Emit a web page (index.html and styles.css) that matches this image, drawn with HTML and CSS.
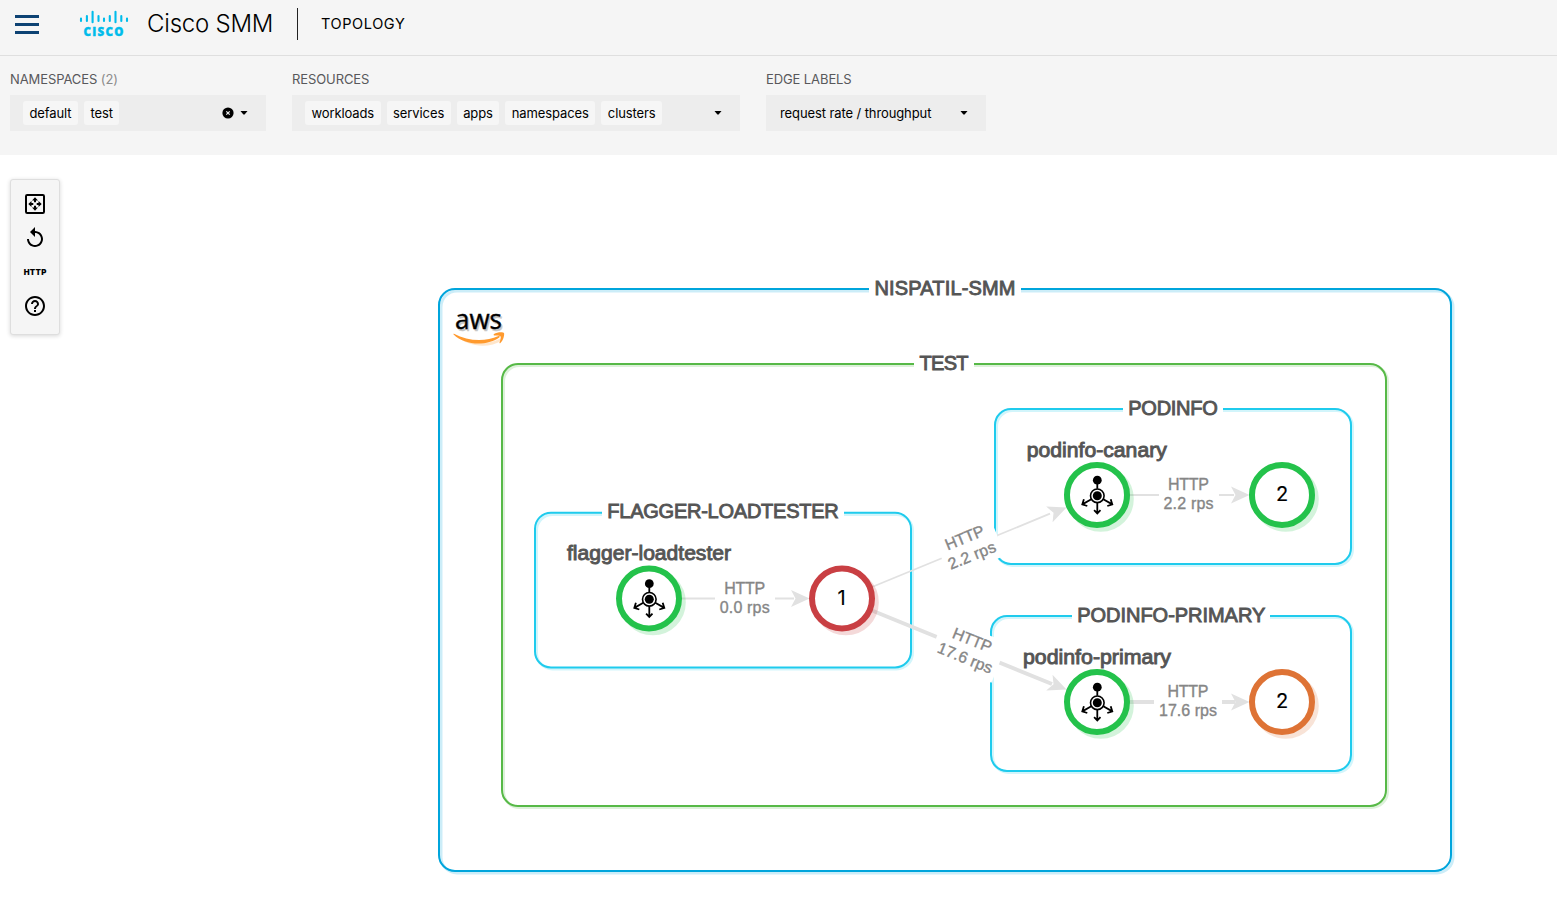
FILE: index.html
```html
<!DOCTYPE html>
<html lang="en">
<head>
<meta charset="utf-8">
<title>Cisco SMM - Topology</title>
<link rel="stylesheet" href="styles.css">
</head>
<body>
<header class="topbar">
  <button class="menu" aria-label="Menu"><span></span><span></span><span></span></button>
  <svg class="logo" width="50" height="28" viewBox="0 0 50 28">
    <g class="logo-bars">
      <path d="M2 8.500v2.400M7.900 6v4.900M13.600 1.800v10.400M19.500 6v4.900M25 8.500v2.400M30.800 6v4.900M36.500 1.800v10.400M42.300 6v4.900M48 8.500v2.400"/>
    </g>
    <text class="logo-text" x="4.500" y="26" textLength="40" lengthAdjust="spacing">CISCO</text>
  </svg>
  <span class="product">Cisco SMM</span>
  <span class="divider"></span>
  <span class="page">TOPOLOGY</span>
</header>

<section class="filters">
  <div class="filter namespaces">
    <label>NAMESPACES <span class="count">(2)</span></label>
    <div class="select">
      <span class="chip">default</span><span class="chip">test</span>
      <svg class="clear" width="12" height="12" viewBox="0 0 12 12"><circle cx="6" cy="6" r="5.600"/><path d="M4.300 4.300l3.400 3.400M7.700 4.300L4.300 7.700"/></svg>
      <svg class="caret" width="8" height="4" viewBox="0 0 8 4"><path d="M0.500 0h7L4.600 3.600h-1.200z"/></svg>
    </div>
  </div>
  <div class="filter resources">
    <label>RESOURCES</label>
    <div class="select">
      <span class="chip">workloads</span><span class="chip">services</span><span class="chip">apps</span><span class="chip">namespaces</span><span class="chip">clusters</span>
      <svg class="caret" width="8" height="4" viewBox="0 0 8 4"><path d="M0.500 0h7L4.600 3.600h-1.200z"/></svg>
    </div>
  </div>
  <div class="filter edges">
    <label>EDGE LABELS</label>
    <div class="select">
      <span class="value">request rate / throughput</span>
      <svg class="caret" width="8" height="4" viewBox="0 0 8 4"><path d="M0.500 0h7L4.600 3.600h-1.200z"/></svg>
    </div>
  </div>
</section>

<main class="canvas">
  <svg class="graph" width="1557" height="768" viewBox="0 155 1557 768">
    <defs>
      <g id="service">
        <circle r="4.400" cy="-15.600"/>
        <circle r="6.800" class="ring"/>
        <circle r="4.500"/>
        <path class="arms" d="M0 -12v5M0 7v10.600M-3.200 14.400L0 17.600L3.200 14.400M-6 3.400L-15 8.600M-13.400 3.400L-15 8.600L-10 10.200M6 3.400L15 8.600M13.400 3.400L15 8.600L10 10.200"/>
      </g>
      <path id="arrow" d="M0 0L-18.500 -8.500L-14 0L-18.500 8.500z"/>
    </defs>

    <g class="group cluster"><rect class="shade" x="441" y="291" width="1012" height="582" rx="16"/><rect x="439" y="289" width="1012" height="582" rx="16"/></g>
    <g class="group namespace"><rect class="shade" x="503.500" y="365.500" width="884" height="442" rx="16"/><rect x="502" y="364" width="884" height="442" rx="16"/></g>
    <g class="group app">
      <rect class="shade" x="536.500" y="514.500" width="376" height="154.500" rx="16"/><rect x="535" y="512.700" width="376" height="154.700" rx="16"/>
      <rect class="shade" x="996.500" y="410.500" width="356" height="155" rx="16"/><rect x="995" y="409" width="356" height="155" rx="16"/>
      <rect class="shade" x="992.500" y="617.500" width="360" height="155" rx="16"/><rect x="991" y="616" width="360" height="155" rx="16"/>
    </g>

    <g class="plate">
      <rect x="869" y="276" width="152" height="24"/>
      <rect x="914" y="351" width="60" height="24"/>
      <rect x="602" y="500" width="242" height="24"/>
      <rect x="1123" y="396" width="100" height="24"/>
      <rect x="1072" y="603" width="198" height="24"/>
    </g>
    <g class="title">
      <text x="874.500" y="294.500" textLength="141">NISPATIL-SMM</text>
      <text x="919.500" y="370" textLength="49">TEST</text>
      <text x="607.300" y="518.300" textLength="231.500">FLAGGER-LOADTESTER</text>
      <text x="1128.300" y="414.700" textLength="89.500">PODINFO</text>
      <text x="1077.300" y="621.700" textLength="188">PODINFO-PRIMARY</text>
      <text x="567" y="560" textLength="164" lengthAdjust="spacingAndGlyphs">flagger-loadtester</text>
      <text x="1026.800" y="457" textLength="140" lengthAdjust="spacingAndGlyphs">podinfo-canary</text>
      <text x="1023" y="664" textLength="148" lengthAdjust="spacingAndGlyphs">podinfo-primary</text>
    </g>

    <g class="aws">
      <text class="aws-shade" x="456.500" y="330.500" textLength="47" lengthAdjust="spacingAndGlyphs">aws</text>
      <text x="455" y="329" textLength="47" lengthAdjust="spacingAndGlyphs">aws</text>
      <g>
        <path class="smile-shade" d="M456.500 336c14 8.500 30 9.500 44 2.500l1.500 2c-13 8-33 7-45.500-4.500z"/>
        <path d="M454 333.700c14 7.500 31 8.300 44.500 2.300c1.200-.4 1.800.8.800 1.500c-13 9-34.500 8-45.700-3c-.5-.6 0-1 .4-.8z"/>
        <path d="M494 334c3-2.200 9.500-2.200 10-1c.6 1.200-.4 7.200-3.600 10c-.6.500-1.200.2-.9-.5c.7-1.700 1.800-5.200 1-6.300c-.8-1-4.300-.8-6.200-.7c-.8 0-.9-1-.3-1.500z"/>
      </g>
    </g>

    <g class="edge">
      <path d="M681 598.500H794M1129 495H1234M872 587L1050 513.700"/>
      <path class="wide" d="M872 610.500L1052 684M1129 702H1235"/>
    </g>
    <g class="arrow">
      <use href="#arrow" transform="translate(809.500 598.500)"/>
      <use href="#arrow" transform="translate(1249.500 495)"/>
      <use href="#arrow" transform="translate(1249.500 702)"/>
      <use href="#arrow" transform="translate(1066.500 507.500) rotate(-22.200)"/>
      <use href="#arrow" transform="translate(1066.500 689.500) rotate(22)"/>
    </g>
    <g class="plate">
      <rect x="715" y="577" width="60" height="43"/>
      <rect x="1159" y="473.500" width="60" height="43"/>
      <rect x="1154" y="680.500" width="68" height="43"/>
      <rect x="-30" y="-21.500" width="60" height="43" transform="translate(969.500 547) rotate(-22.200)"/>
      <rect x="-34" y="-21.500" width="68" height="43" transform="translate(968 650) rotate(22)"/>
    </g>
    <g class="rate">
      <g transform="translate(744.700 598.500)"><text x="-20.500" y="-4.700" textLength="41">HTTP</text><text x="-25" y="14.400" textLength="50">0.0 rps</text></g>
      <g transform="translate(1188.500 495)"><text x="-20.500" y="-4.700" textLength="41">HTTP</text><text x="-25" y="14" textLength="50">2.2 rps</text></g>
      <g transform="translate(1188 702)"><text x="-20.500" y="-4.700" textLength="41">HTTP</text><text x="-29" y="14" textLength="58">17.6 rps</text></g>
      <g transform="translate(968.500 547) rotate(-22.200)"><text x="-20.500" y="-4.700" textLength="41">HTTP</text><text x="-25" y="14.500" textLength="50">2.2 rps</text></g>
      <g transform="translate(968.500 649.500) rotate(22)"><text x="-20.500" y="-4.700" textLength="41">HTTP</text><text x="-29" y="14.500" textLength="58">17.6 rps</text></g>
    </g>

    <g class="node healthy">
      <circle class="shade" cx="652.800" cy="602.300" r="30"/><circle cx="649" cy="598.500" r="30"/>
      <circle class="shade" cx="1100.800" cy="498.800" r="30"/><circle cx="1097" cy="495" r="30"/>
      <circle class="shade" cx="1100.800" cy="705.800" r="30"/><circle cx="1097" cy="702" r="30"/>
      <circle class="shade" cx="1285.800" cy="498.800" r="30"/><circle cx="1282" cy="495" r="30"/>
    </g>
    <g class="node critical"><circle class="shade" cx="845.800" cy="602.300" r="30"/><circle cx="842" cy="598.500" r="30"/></g>
    <g class="node warning"><circle class="shade" cx="1285.800" cy="705.800" r="30"/><circle cx="1282" cy="702" r="30"/></g>
    <use href="#service" transform="translate(649.300 599.300)"/>
    <use href="#service" transform="translate(1097.300 495.800)"/>
    <use href="#service" transform="translate(1097.300 702.800)"/>
    <g class="number">
      <text x="841.500" y="604.600">1</text>
      <text x="1282" y="501">2</text>
      <text x="1282" y="708">2</text>
    </g>
  </svg>

  <nav class="tools">
    <svg width="24" height="24" viewBox="0 0 24 24"><rect class="frame" x="3" y="3" width="18" height="18" rx="1.200"/><path d="M12 5.300L15 8.500H13V10.300H11V8.500H9zM12 18.700L15 15.500H13V13.700H11V15.500H9zM5.300 12L8.500 9V11H10.300V13H8.500V15zM18.700 12L15.500 9V11H13.700V13H15.500V15z"/></svg>
    <svg width="24" height="24" viewBox="0 0 24 24"><path d="M12 5V1L7 6l5 5V7c3.310 0 6 2.690 6 6s-2.690 6-6 6-6-2.690-6-6H4c0 4.420 3.580 8 8 8s8-3.580 8-8-3.580-8-8-8z"/></svg>
    <svg width="24" height="24" viewBox="0 0 24 24"><text class="http" x="0.700" y="15" textLength="22.600" lengthAdjust="spacing">HTTP</text></svg>
    <svg width="24" height="24" viewBox="0 0 24 24"><path d="M11 18h2v-2h-2v2zm1-16C6.480 2 2 6.480 2 12s4.480 10 10 10 10-4.480 10-10S17.520 2 12 2zm0 18c-4.410 0-8-3.590-8-8s3.590-8 8-8 8 3.590 8 8-3.590 8-8 8zm0-14c-2.210 0-4 1.790-4 4h2c0-1.100.9-2 2-2s2 .9 2 2c0 2-3 1.750-3 5h2c0-2.250 3-2.500 3-5 0-2.210-1.790-4-4-4z"/></svg>
  </nav>
</main>
</body>
</html>
```
FILE: styles.css
```css
* { box-sizing: border-box; }
body {
  margin: 0;
  height: 923px;
  overflow: hidden;
  background: #fff;
  color: #000;
  font-family: Inter, "Liberation Sans", sans-serif;
}

/* Header */
.topbar {
  display: flex;
  align-items: center;
  height: 56px;
  padding: 0 0 8px 15px;
  background: #f5f5f5;
  border-bottom: 1px solid #dfdfdf;
}
.menu {
  display: flex;
  flex-direction: column;
  gap: 5px;
  width: 24px;
  margin-top: 2px;
  padding: 0;
  border: 0;
  background: none;
}
.menu span { height: 3px; background: #0d4273; }
.logo { margin-left: 40px; }
.logo-bars { fill: none; stroke: #00bceb; stroke-width: 2.1; stroke-linecap: round; }
.logo-text { fill: #00bceb; stroke: #00bceb; stroke-width: .4; font: 800 11.5px "Open Sans", sans-serif; }
.product { width: 150px; padding-left: 18px; font-size: 24px; font-weight: 300; letter-spacing: -.22px; white-space: nowrap; }
.divider { width: 1px; height: 32px; margin-left: 18px; background: #222; }
.page { margin-left: 23px; font-size: 14.5px; letter-spacing: .6px; }

/* Filters */
.filters {
  display: flex;
  gap: 26px;
  height: 99px;
  padding: 14px 10px 0;
  background: #f5f5f5;
}
.filter label {
  display: block;
  height: 25px;
  font-size: 13px;
  line-height: 18px;
  letter-spacing: -.1px;
  color: #58585b;
}
.count { color: #8c8c8c; }
.namespaces { width: 256px; }
.resources { width: 448px; }
.edges { width: 220px; }
.select {
  display: flex;
  align-items: center;
  gap: 6.2px;
  height: 36px;
  padding: 0 18px 0 13px;
  background: #ededed;
  font-size: 13px;
  letter-spacing: -.1px;
}
.chip {
  height: 24px;
  padding: 0 6.4px;
  border-radius: 3px;
  background: #f6f6f6;
  line-height: 25px;
}
.value { padding: 0 0 1px 1px; white-space: nowrap; }
.caret { margin-left: auto; }
.clear { margin-left: auto; }
.clear + .caret { margin-left: 0; }
.clear path { stroke: #eee; stroke-width: 1.2; }

/* Canvas */
.canvas { position: relative; height: 768px; }
.graph { display: block; }
.tools {
  position: absolute;
  left: 10px;
  top: 24px;
  display: flex;
  flex-direction: column;
  align-items: center;
  gap: 10px;
  width: 50px;
  height: 156px;
  padding-top: 12px;
  background: #f5f5f5;
  border: 1px solid #dedede;
  border-radius: 3px;
  box-shadow: 0 1px 4px rgba(0, 0, 0, .16);
}
.frame { fill: none; stroke: #000; stroke-width: 2; }
.http { font: 900 7.8px Inter, sans-serif; }

/* Graph */
.group rect { fill: none; stroke-width: 2; }
.group .shade { stroke-width: 3; opacity: .2; }
.cluster { stroke: #00a5dc; }
.namespace { stroke: #57b947; }
.app { stroke: #1fcbed; }
.plate { fill: #fff; }
.title { fill: #555; stroke: #555; stroke-width: .9; font: 20px "Liberation Sans", Arial, sans-serif; }
.aws { fill: #ff9a2e; }
.aws text { fill: #000; stroke: #000; stroke-width: .4; font: 500 27px "Open Sans", sans-serif; }
.aws .aws-shade { opacity: .22; }
.smile-shade { opacity: .25; }
.edge { fill: none; stroke: #e1e1e1; stroke-width: 1.8; }
.edge .wide { stroke-width: 4; }
.arrow { fill: #e1e1e1; }
.rate { fill: #868686; stroke: #868686; stroke-width: .35; font: 16px "Liberation Sans", Arial, sans-serif; }
.node circle { fill: #fff; stroke-width: 6; }
.node .shade { fill: none; opacity: .2; }
.healthy { stroke: #24c24b; }
.critical { stroke: #c93f43; }
.warning { stroke: #de7335; }
.ring { fill: none; stroke: #000; stroke-width: 1.6; }
.arms { fill: none; stroke: #000; stroke-width: 1.8; }
.number { font: 20px Inter, sans-serif; text-anchor: middle; stroke: #000; stroke-width: .15; }
```
